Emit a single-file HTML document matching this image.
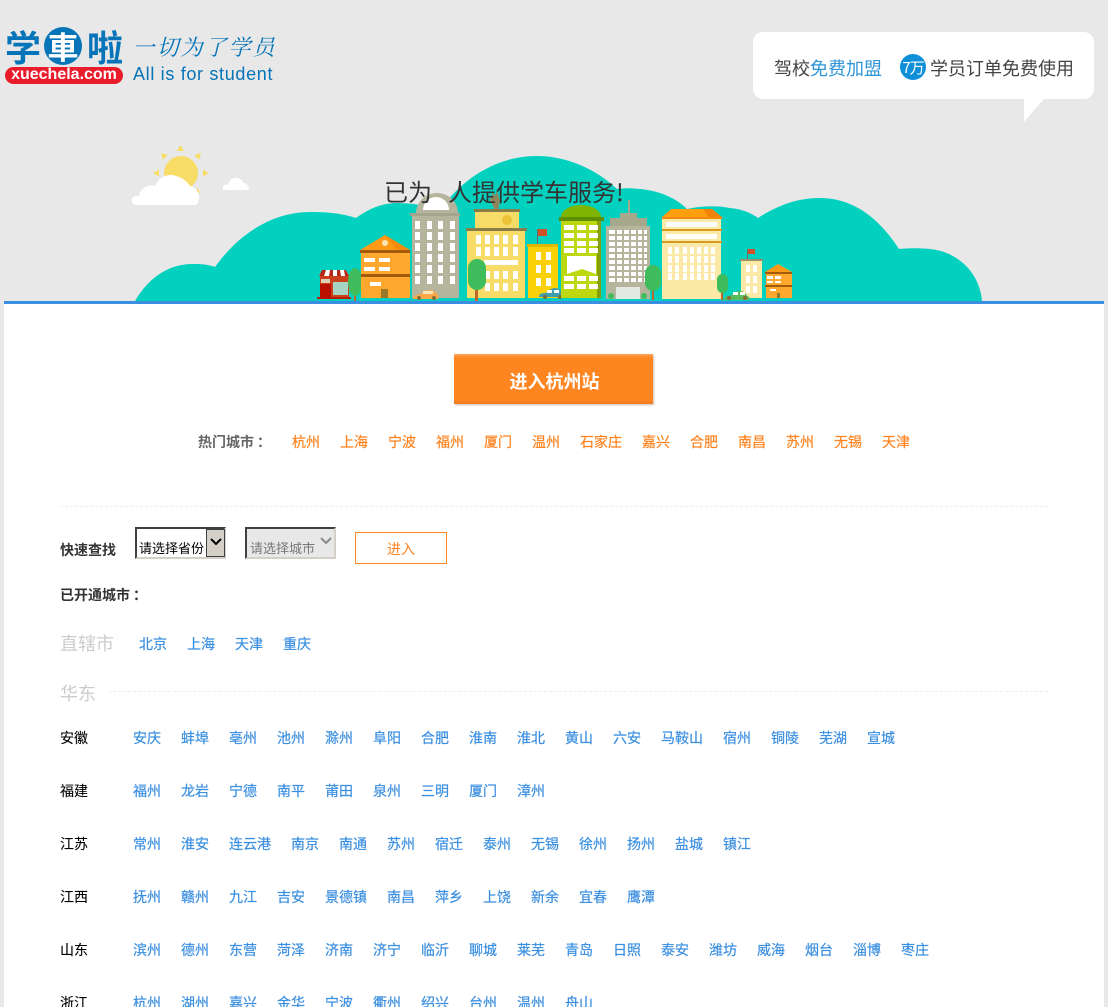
<!DOCTYPE html>
<html lang="zh-CN"><head><meta charset="utf-8"><title>学车啦</title>
<style>
html,body{margin:0;padding:0;width:1108px;height:1007px;overflow:hidden}
body{background:#e8e8e8;font:14px/20px "Liberation Sans","WenQuanYi Zen Hei","Noto Sans CJK SC",sans-serif;color:#333}
#wrap{position:relative;width:1108px;height:1007px;overflow:hidden;background:#e8e8e8}
.a{position:absolute;white-space:nowrap}
#main{position:absolute;left:4px;top:304px;width:1100px;height:703px;background:#fff}
.row{position:absolute;display:flex;gap:20px;white-space:nowrap;height:20px;line-height:20px;-webkit-text-stroke:.2px}
.b{color:#3b8fe0}.o{color:#ff8420}
.row.b{left:133px}
.p{position:absolute;left:60px;color:#000;-webkit-text-stroke:.1px}
.dash{position:absolute;border-top:1px dashed #eee;height:0}
.sel{position:absolute;box-sizing:border-box;top:527px;width:91px;height:32px;border:2px solid;border-color:#404040 #d4d0c8 #d4d0c8 #404040}
</style></head><body><div id="wrap">
<svg class="a" style="left:0;top:0" width="1108" height="310" viewBox="0 0 1108 310">
<path d="M135 301C150 275 172 263 195 264C203 264 210 265 215 267C240 232 275 211 313 212C330 212 344 214 356 218C368 209 382 203 397 203C410 203 425 205 440 210C465 175 500 156 537 156C565 156 595 168 617 189C625 188 632 188 640 189C660 191 676 198 687 209C700 206 715 205 730 208C742 209 751 213 758 218C778 205 798 198 820 198C855 198 880 220 899 249C910 248 920 248 930 249C960 252 980 275 982 301Z" fill="#03d1bf"/>
<circle cx="181" cy="173" r="17" fill="#f8dc68"/>
<path d="M180.500 145l3.500 6h-7zM161 153l6.500 2-4.500 5zM201 153l-6.500 2 4.500 5zM153 173l6-3.500v7zM208.500 173l-5.500-3.500v7zM197 187l3 6-3-1z" fill="#f8dc68"/>
<path d="M136 205a4 4 0 0 1 0-9h3c1-8 9-12 16-10 4-9 13-13 21-10 8 2 12 7 14 10 6 2 9 6 9 11 0 3-1 6-3 8z" fill="#fff"/>
<path d="M224 190a3 3 0 0 1 0-5c3 0 4-1 5-2 1-4 5-6 9-5 3 1 5 3 5 5 4 0 6 3 6 7z" fill="#fff"/>
<!-- shop -->
<rect x="320" y="276" width="29" height="22" fill="#cb3f1d"/><rect x="317" y="297" width="34" height="2" fill="#b71c05"/>
<rect x="320" y="284" width="11" height="14" fill="#b70f00"/><rect x="333" y="282" width="15" height="13" fill="#a6d3c4"/>
<path d="M319 276l3-6h24l3 6z" fill="#fff"/><path d="M322 270h4l-2 6h-5zM330 270h3v6h-4zM337 270h3l1 6h-4zM344 270h2l3 6h-4z" fill="#b7261a"/>
<rect x="321" y="279" width="9" height="4" fill="#ddd0b8"/>
<rect x="354" y="270" width="2" height="31" fill="#c0662a"/><ellipse cx="355" cy="282" rx="7" ry="14" fill="#3fbc5b"/>
<!-- orange house -->
<rect x="361" y="250" width="49" height="48" fill="#ffa82e"/>
<path d="M360 250l25-15 25 15z" fill="#ff9a16"/><path d="M385 235l25 15h-13l-12-15z" fill="#f68b0c"/><circle cx="385" cy="243" r="3" fill="#fde6b8"/>
<rect x="360" y="250" width="50" height="3" fill="#a35a0b"/><rect x="361" y="274" width="49" height="3" fill="#a35a0b"/>
<g fill="#fff"><rect x="364" y="258" width="11" height="4"/><rect x="379" y="258" width="11" height="4"/><rect x="364" y="267" width="11" height="4"/><rect x="379" y="267" width="11" height="4"/><rect x="370" y="282" width="11" height="4"/></g>
<rect x="381" y="289" width="7" height="9" fill="#98792a"/>
<!-- grey tower -->
<path d="M416 213a21 20 0 0 1 42 0z" fill="#b4b59c"/><path d="M423 210a13 13 0 0 1 26 0z" fill="#fff"/>
<rect x="412" y="213" width="47" height="85" fill="#b4b59c"/><rect x="410" y="213" width="50" height="3" fill="#a3a58c"/>
<g fill="#fff"><rect x="415" y="221" width="5" height="8"/><rect x="427" y="221" width="5" height="8"/><rect x="438" y="221" width="5" height="8"/><rect x="450" y="221" width="5" height="8"/>
<rect x="415" y="232" width="5" height="8"/><rect x="427" y="232" width="5" height="8"/><rect x="438" y="232" width="5" height="8"/><rect x="450" y="232" width="5" height="8"/>
<rect x="415" y="243" width="5" height="8"/><rect x="427" y="243" width="5" height="8"/><rect x="438" y="243" width="5" height="8"/><rect x="450" y="243" width="5" height="8"/>
<rect x="415" y="254" width="5" height="8"/><rect x="427" y="254" width="5" height="8"/><rect x="438" y="254" width="5" height="8"/><rect x="450" y="254" width="5" height="8"/>
<rect x="415" y="265" width="5" height="8"/><rect x="427" y="265" width="5" height="8"/><rect x="438" y="265" width="5" height="8"/><rect x="450" y="265" width="5" height="8"/>
<rect x="415" y="276" width="5" height="8"/><rect x="427" y="276" width="5" height="8"/><rect x="438" y="276" width="5" height="8"/><rect x="450" y="276" width="5" height="8"/></g>
<!-- car orange -->
<path d="M413 299c0-3 3-4 8-5 3-3 6-4 9-4 4 0 5 2 7 4 1 1 2 3 1 5z" fill="#f9a94a"/><rect x="423" y="291" width="10" height="3" fill="#fde6b8"/><circle cx="419" cy="298" r="2" fill="#8a6b35"/><circle cx="434" cy="298" r="2" fill="#8a6b35"/>
<!-- yellow building -->
<path d="M495 210l-5-10 3-8 2 4 2-5 3 10-2 9z" fill="#8f8659"/>
<rect x="475" y="209" width="44" height="20" fill="#f8dc68"/><rect x="474" y="209" width="46" height="3" fill="#8a7d4a"/>
<circle cx="507" cy="220" r="5" fill="#edc238"/>
<rect x="467" y="231" width="58" height="67" fill="#f8dc68"/><rect x="466" y="228" width="61" height="3" fill="#8a7d4a"/>
<g fill="#fff"><rect x="476" y="235" width="5" height="9"/><rect x="485" y="235" width="5" height="9"/><rect x="494" y="235" width="5" height="9"/><rect x="503" y="235" width="5" height="9"/><rect x="513" y="235" width="5" height="9"/>
<rect x="476" y="247" width="5" height="9"/><rect x="485" y="247" width="5" height="9"/><rect x="494" y="247" width="5" height="9"/><rect x="503" y="247" width="5" height="9"/><rect x="513" y="247" width="5" height="9"/>
<rect x="484" y="260" width="34" height="5"/>
<rect x="485" y="271" width="5" height="8"/><rect x="494" y="271" width="5" height="8"/><rect x="503" y="271" width="5" height="8"/><rect x="513" y="271" width="5" height="8"/>
<rect x="485" y="283" width="5" height="8"/><rect x="494" y="283" width="5" height="8"/><rect x="503" y="283" width="5" height="8"/><rect x="513" y="283" width="5" height="8"/></g>
<rect x="475" y="282" width="3" height="19" fill="#c0662a"/><rect x="468" y="259" width="18" height="31" rx="9" fill="#3fbc5b"/>
<!-- gold building -->
<rect x="528" y="246" width="30" height="52" fill="#f9d106"/><rect x="527" y="244" width="31" height="3" fill="#e0b800"/>
<rect x="537" y="229" width="1" height="15" fill="#666"/><rect x="538" y="229" width="9" height="7" fill="#d0502a"/>
<g fill="#fff"><rect x="536" y="252" width="5" height="8"/><rect x="546" y="252" width="5" height="8"/><rect x="536" y="265" width="5" height="8"/><rect x="546" y="265" width="5" height="8"/><rect x="536" y="278" width="5" height="8"/><rect x="546" y="278" width="5" height="8"/></g>
<path d="M539 297c0-3 2-4 7-4 3-3 6-5 9-5 3 0 6 2 7 4 2 0 2 3 2 5z" fill="#3d9eae"/><rect x="547" y="290" width="5" height="3" fill="#fff"/><rect x="554" y="290" width="5" height="3" fill="#fff"/><circle cx="545" cy="297" r="2" fill="#7a6a40"/><circle cx="560" cy="297" r="2" fill="#7a6a40"/>
<!-- green building -->
<rect x="561" y="218" width="40" height="80" fill="#bdd80f"/><rect x="597" y="218" width="4" height="80" fill="#86a009"/>
<path d="M561 217a20 12 0 0 1 40 0z" fill="#7fb500"/><rect x="559" y="217" width="45" height="4" fill="#5f8f00"/>
<g fill="#fff"><rect x="564" y="225" width="10" height="5"/><rect x="577" y="225" width="9" height="5"/><rect x="589" y="225" width="9" height="5"/><rect x="564" y="233" width="10" height="5"/><rect x="577" y="233" width="9" height="5"/><rect x="589" y="233" width="9" height="5"/><rect x="564" y="241" width="10" height="5"/><rect x="577" y="241" width="9" height="5"/><rect x="589" y="241" width="9" height="5"/><rect x="564" y="248" width="10" height="5"/><rect x="577" y="248" width="9" height="5"/><rect x="589" y="248" width="9" height="5"/>
<path d="M567 256h29v18l-14-5-15 5z"/>
<rect x="564" y="276" width="10" height="5"/><rect x="577" y="276" width="9" height="5"/><rect x="589" y="276" width="9" height="5"/><rect x="564" y="284" width="10" height="5"/><rect x="577" y="284" width="9" height="5"/><rect x="589" y="284" width="9" height="5"/></g>
<!-- white-grey tower -->
<rect x="628" y="200" width="2" height="14" fill="#a6a88c"/>
<rect x="610" y="218" width="37" height="9" fill="#a6a88c"/><rect x="620" y="213" width="17" height="6" fill="#a6a88c"/>
<rect x="606" y="226" width="44" height="73" fill="#b4b59c"/>
<g fill="#fff"><rect x="609" y="230" width="38" height="4"/><rect x="609" y="236" width="38" height="4"/><rect x="609" y="242" width="38" height="4"/><rect x="609" y="248" width="38" height="4"/><rect x="609" y="254" width="38" height="4"/><rect x="609" y="260" width="38" height="4"/><rect x="609" y="266" width="38" height="4"/><rect x="609" y="272" width="38" height="4"/><rect x="609" y="278" width="38" height="4"/></g>
<g fill="#b4b59c"><rect x="615" y="229" width="2" height="54"/><rect x="622" y="229" width="2" height="54"/><rect x="629" y="229" width="2" height="54"/><rect x="636" y="229" width="2" height="54"/><rect x="642" y="229" width="2" height="54"/></g>
<rect x="616" y="287" width="24" height="12" fill="#e2e9e2"/>
<circle cx="611" cy="296" r="3" fill="#3fbc5b"/><circle cx="644" cy="296" r="3" fill="#3fbc5b"/>
<rect x="652" y="280" width="2" height="20" fill="#c0662a"/><rect x="645" y="265" width="16" height="26" rx="8" fill="#3fbc5b"/>
<!-- cream building -->
<rect x="662" y="218" width="59" height="81" fill="#fbe9a8"/>
<path d="M661 218l10-9h41l11 9z" fill="#ff9f10"/><path d="M703 209h9l11 9h-14z" fill="#ef8207"/>
<rect x="662" y="217" width="60" height="2" fill="#f08a0c"/><rect x="662" y="229" width="60" height="2" fill="#d99a20"/><rect x="662" y="241" width="60" height="2" fill="#d99a20"/>
<g fill="#fff"><rect x="666" y="222" width="51" height="5"/><rect x="666" y="234" width="51" height="5"/>
<rect x="668" y="247" width="4" height="7"/><rect x="675" y="247" width="4" height="7"/><rect x="683" y="247" width="4" height="7"/><rect x="690" y="247" width="4" height="7"/><rect x="697" y="247" width="4" height="7"/><rect x="704" y="247" width="4" height="7"/><rect x="711" y="247" width="4" height="7"/>
<rect x="668" y="256" width="4" height="7"/><rect x="675" y="256" width="4" height="7"/><rect x="683" y="256" width="4" height="7"/><rect x="690" y="256" width="4" height="7"/><rect x="697" y="256" width="4" height="7"/><rect x="704" y="256" width="4" height="7"/><rect x="711" y="256" width="4" height="7"/>
<rect x="668" y="265" width="4" height="7"/><rect x="675" y="265" width="4" height="7"/><rect x="683" y="265" width="4" height="7"/><rect x="690" y="265" width="4" height="7"/><rect x="697" y="265" width="4" height="7"/><rect x="704" y="265" width="4" height="7"/><rect x="711" y="265" width="4" height="7"/>
<rect x="668" y="273" width="4" height="7"/><rect x="675" y="273" width="4" height="7"/><rect x="683" y="273" width="4" height="7"/><rect x="690" y="273" width="4" height="7"/><rect x="697" y="273" width="4" height="7"/><rect x="704" y="273" width="4" height="7"/><rect x="711" y="273" width="4" height="7"/></g>
<rect x="721" y="285" width="2" height="15" fill="#c0662a"/><rect x="717" y="274" width="11" height="19" rx="5.500" fill="#3fbc5b"/>
<!-- small cream -->
<rect x="741" y="261" width="21" height="37" fill="#fbe9a8"/><rect x="740" y="259" width="23" height="2" fill="#9a9168"/>
<rect x="747" y="249" width="1" height="10" fill="#666"/><rect x="748" y="249" width="7" height="5" fill="#d0502a"/>
<g fill="#fff"><rect x="746" y="265" width="4" height="7"/><rect x="753" y="265" width="4" height="7"/><rect x="746" y="276" width="4" height="7"/><rect x="753" y="276" width="4" height="7"/><rect x="746" y="286" width="4" height="7"/><rect x="753" y="286" width="4" height="7"/></g>
<path d="M724 300c0-3 3-4 8-5 3-3 5-4 8-4 4 0 6 2 7 5 1 0 3 1 3 4z" fill="#55bd5d"/><rect x="733" y="292" width="5" height="3" fill="#fff"/><rect x="740" y="292" width="5" height="3" fill="#fff"/><circle cx="729" cy="298" r="2" fill="#8a6b35"/><circle cx="745" cy="298" r="2" fill="#8a6b35"/>
<!-- small orange -->
<rect x="766" y="272" width="26" height="26" fill="#ffa82e"/><path d="M765 272l13-8 14 8z" fill="#ff9a16"/><rect x="765" y="272" width="27" height="2" fill="#a35a0b"/><rect x="765" y="285" width="27" height="2" fill="#a35a0b"/>
<g fill="#fff"><rect x="767" y="276" width="6" height="3"/><rect x="775" y="276" width="6" height="3"/><rect x="767" y="281" width="6" height="2"/><rect x="775" y="281" width="6" height="2"/><rect x="770" y="289" width="6" height="2"/></g><rect x="777" y="293" width="3" height="5" fill="#98792a"/>
<rect x="4" y="301" width="1100" height="3" fill="#3b8fe0"/>
<!-- bubble -->
<rect x="753" y="32" width="341" height="67" rx="10" fill="#fff"/><path d="M1024 98h21l-21 24z" fill="#fff"/>
<circle cx="913" cy="67" r="13" fill="#0e8fd8"/>
<!-- logo -->
<circle cx="63" cy="46" r="19" fill="#0574b8"/>
<rect x="5" y="67" width="118" height="17" rx="8.500" fill="#ea1c2c"/>
</svg>
<div id="main"></div>

<div class="a" style="left:5px;top:24px;font:700 36px/44px 'Noto Sans CJK SC',sans-serif;color:#0574b8">学</div>
<div class="a" style="left:44px;top:24px;width:38px;text-align:center;font:700 31px/44px 'Noto Sans CJK TC',sans-serif;color:#fff">車</div>
<div class="a" style="left:87px;top:24px;font:700 36px/44px 'Noto Sans CJK SC',sans-serif;color:#0574b8">啦</div>
<div class="a" style="left:5px;top:66px;width:118px;text-align:center;font:700 16px/18px 'Liberation Sans',sans-serif;color:#fff">xuechela.com</div>
<div class="a" style="left:131px;top:33px;font:22px/28px 'Noto Serif CJK SC',serif;color:#0574b8;letter-spacing:2px;transform:skewX(-14deg);transform-origin:0 100%">一切为了学员</div>
<div class="a" style="left:133px;top:64px;font:18px/21px 'Liberation Sans',sans-serif;color:#0574b8;letter-spacing:.67px">All is for student</div>

<div class="a" style="left:774px;top:57px;font:18px/22px 'Noto Sans CJK SC',sans-serif;color:#444">驾校<span style="color:#2f95d8">免费加盟</span></div>
<div class="a" style="left:900px;top:57px;width:26px;text-align:center;font:15px/21px 'Noto Sans CJK SC',sans-serif;color:#fff;letter-spacing:-1px">7万</div>
<div class="a" style="left:930px;top:57px;font:18px/22px 'Noto Sans CJK SC',sans-serif;color:#444">学员订单免费使用</div>

<div class="a" style="left:384px;top:175px;font:24px/32px 'Noto Sans CJK SC',sans-serif;color:#333">已为</div>
<div class="a" style="left:448px;top:175px;font:24px/32px 'Noto Sans CJK SC',sans-serif;color:#333">人提供学车服务!</div>

<div class="a" style="left:454px;top:354px;width:199px;height:50px;background:linear-gradient(#ffa35a 0,#ff8521 4px,#ff8521 46px,#ec7c20 100%);box-shadow:1px 1px 2px #cdbfb3;text-align:center;text-indent:2px;font:700 18px/54px 'WenQuanYi Zen Hei','Noto Sans CJK SC',sans-serif;color:#fff">进入杭州站</div>

<div class="a" style="left:198px;top:432px;font-weight:700;color:#666">热门城市<span style="padding-left:3px">：</span></div>
<div class="row o" style="left:292px;top:432px"><span>杭州</span><span>上海</span><span>宁波</span><span>福州</span><span>厦门</span><span>温州</span><span>石家庄</span><span>嘉兴</span><span>合肥</span><span>南昌</span><span>苏州</span><span>无锡</span><span>天津</span></div>
<div class="dash" style="left:60px;top:506px;width:988px"></div>

<div class="a" style="left:60px;top:540px;font-weight:700">快速查找</div>
<div class="sel" style="left:135px;background:#fff;color:#000;font-size:13px;line-height:40px;padding-left:2px">请选择省份
 <div class="a" style="left:69px;top:0;width:19px;height:28px;box-sizing:border-box;background:#d4d0c8;border:1px solid #404040"></div>
 <svg class="a" style="left:73px;top:9px" width="12" height="8"><path d="M1 1l5 5 5-5" fill="none" stroke="#000" stroke-width="2"/></svg>
</div>
<div class="sel" style="left:245px;background:#e8e8e8;color:#777;font-size:13px;line-height:40px;padding-left:3px">请选择城市
 <svg class="a" style="left:73px;top:8px" width="12" height="8"><path d="M1 1l5 5 5-5" fill="none" stroke="#888" stroke-width="2"/></svg>
</div>
<div class="a" style="left:355px;top:532px;width:90px;height:30px;border:1px solid #ff8420;text-align:center;line-height:33px;color:#ff8420">进入</div>

<div class="a" style="left:60px;top:585px;font-weight:700">已开通城市<span style="padding-left:3px">：</span></div>
<div class="a" style="left:60px;top:633px;font-size:18px;line-height:22px;color:#ccc">直辖市</div>
<div class="row b" style="left:139px;top:634px"><span>北京</span><span>上海</span><span>天津</span><span>重庆</span></div>
<div class="a" style="left:60px;top:683px;font-size:18px;line-height:22px;color:#ccc">华东</div>
<div class="dash" style="left:108px;top:691px;width:940px"></div>

<div class="p" style="top:728px">安徽</div>
<div class="row b" style="top:728px"><span>安庆</span><span>蚌埠</span><span>亳州</span><span>池州</span><span>滁州</span><span>阜阳</span><span>合肥</span><span>淮南</span><span>淮北</span><span>黄山</span><span>六安</span><span>马鞍山</span><span>宿州</span><span>铜陵</span><span>芜湖</span><span>宣城</span></div>
<div class="p" style="top:781px">福建</div>
<div class="row b" style="top:781px"><span>福州</span><span>龙岩</span><span>宁德</span><span>南平</span><span>莆田</span><span>泉州</span><span>三明</span><span>厦门</span><span>漳州</span></div>
<div class="p" style="top:834px">江苏</div>
<div class="row b" style="top:834px"><span>常州</span><span>淮安</span><span>连云港</span><span>南京</span><span>南通</span><span>苏州</span><span>宿迁</span><span>泰州</span><span>无锡</span><span>徐州</span><span>扬州</span><span>盐城</span><span>镇江</span></div>
<div class="p" style="top:887px">江西</div>
<div class="row b" style="top:887px"><span>抚州</span><span>赣州</span><span>九江</span><span>吉安</span><span>景德镇</span><span>南昌</span><span>萍乡</span><span>上饶</span><span>新余</span><span>宜春</span><span>鹰潭</span></div>
<div class="p" style="top:940px">山东</div>
<div class="row b" style="top:940px"><span>滨州</span><span>德州</span><span>东营</span><span>菏泽</span><span>济南</span><span>济宁</span><span>临沂</span><span>聊城</span><span>莱芜</span><span>青岛</span><span>日照</span><span>泰安</span><span>潍坊</span><span>威海</span><span>烟台</span><span>淄博</span><span>枣庄</span></div>
<div class="p" style="top:993px">浙江</div>
<div class="row b" style="top:993px"><span>杭州</span><span>湖州</span><span>嘉兴</span><span>金华</span><span>宁波</span><span>衢州</span><span>绍兴</span><span>台州</span><span>温州</span><span>舟山</span></div>
</div></body></html>
